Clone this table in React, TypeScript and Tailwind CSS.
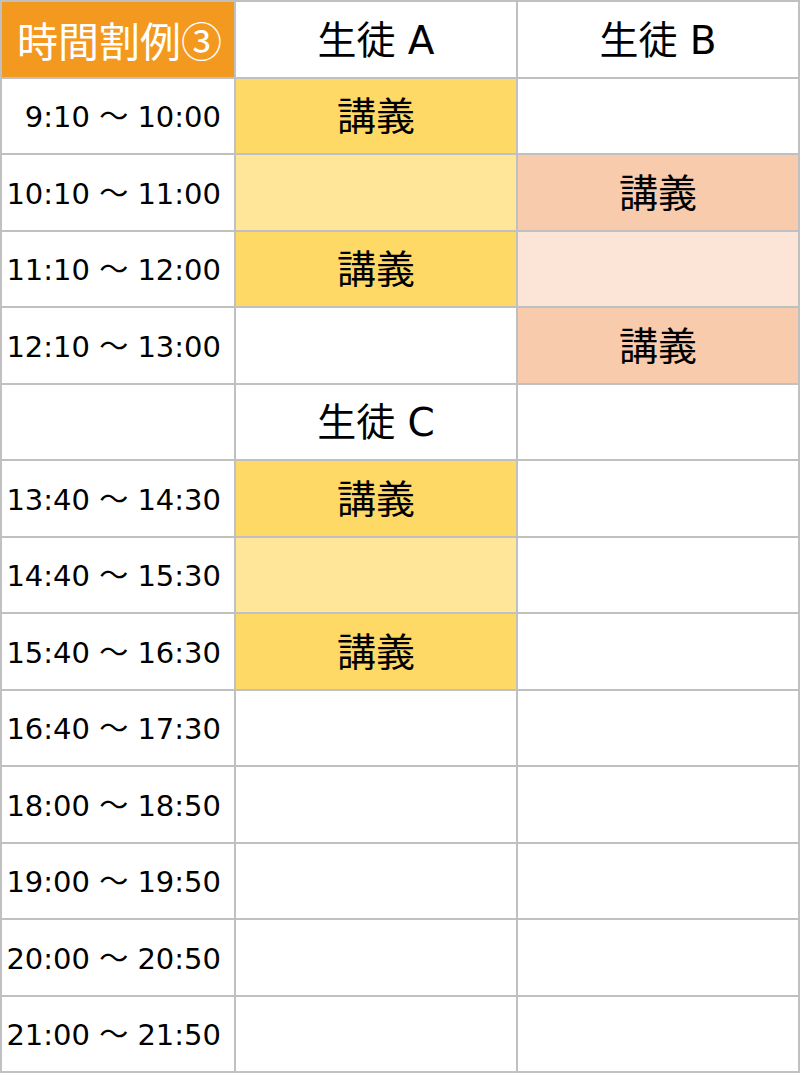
import React from "react";

type Cell = { text?: string; bg?: string; kind?: "time" | "head" | "title" | "lec" };

const Y = "bg-[#ffd966]";
const LY = "bg-[#ffe699]";
const P = "bg-[#f8cbad]";
const LP = "bg-[#fce4d6]";
const W = "bg-white";

const rows: Cell[][] = [
  [
    { text: "時間割例③", bg: "bg-[#f4991f]", kind: "title" },
    { text: "生徒 A", bg: W, kind: "head" },
    { text: "生徒 B", bg: W, kind: "head" },
  ],
  [{ text: "9:10 ～ 10:00", kind: "time" }, { text: "講義", bg: Y, kind: "lec" }, { bg: W }],
  [{ text: "10:10 ～ 11:00", kind: "time" }, { bg: LY }, { text: "講義", bg: P, kind: "lec" }],
  [{ text: "11:10 ～ 12:00", kind: "time" }, { text: "講義", bg: Y, kind: "lec" }, { bg: LP }],
  [{ text: "12:10 ～ 13:00", kind: "time" }, { bg: W }, { text: "講義", bg: P, kind: "lec" }],
  [{ text: "", kind: "time" }, { text: "生徒 C", bg: W, kind: "head" }, { bg: W }],
  [{ text: "13:40 ～ 14:30", kind: "time" }, { text: "講義", bg: Y, kind: "lec" }, { bg: W }],
  [{ text: "14:40 ～ 15:30", kind: "time" }, { bg: LY }, { bg: W }],
  [{ text: "15:40 ～ 16:30", kind: "time" }, { text: "講義", bg: Y, kind: "lec" }, { bg: W }],
  [{ text: "16:40 ～ 17:30", kind: "time" }, { bg: W }, { bg: W }],
  [{ text: "18:00 ～ 18:50", kind: "time" }, { bg: W }, { bg: W }],
  [{ text: "19:00 ～ 19:50", kind: "time" }, { bg: W }, { bg: W }],
  [{ text: "20:00 ～ 20:50", kind: "time" }, { bg: W }, { bg: W }],
  [{ text: "21:00 ～ 21:50", kind: "time" }, { bg: W }, { bg: W }],
];

function CellView({ c }: { c: Cell }) {
  if (c.kind === "time") {
    return (
      <div className="bg-white flex items-center justify-end pr-[13px] pt-[4px] text-[29px] text-black whitespace-nowrap [font-family:'DejaVu_Sans','Noto_Sans_CJK_JP',sans-serif]">
        {c.text}
      </div>
    );
  }
  if (c.kind === "title") {
    return (
      <div className={`${c.bg} flex items-center justify-center pl-[3px] text-[41px] text-white whitespace-nowrap [font-family:'Noto_Sans_CJK_JP',sans-serif]`}>
        {c.text}
      </div>
    );
  }
  if (c.kind === "head" || c.kind === "lec") {
    return (
      <div className={`${c.bg} flex items-center justify-center pt-[2px] text-[39px] text-black whitespace-nowrap [font-family:'DejaVu_Sans','Noto_Sans_CJK_JP',sans-serif]`}>
        {c.text}
      </div>
    );
  }
  return <div className={c.bg ?? "bg-white"} />;
}

export default function App() {
  return (
    <div className="w-[800px] h-[1073px] bg-white">
      <div className="grid grid-cols-[232px_280px_280px] grid-rows-[repeat(14,74.5px)] gap-[2px] p-[2px] bg-[#c0c0c0] w-[800px] h-[1073px] leading-none">
        {rows.map((r, i) => r.map((c, j) => <CellView key={`${i}-${j}`} c={c} />))}
      </div>
    </div>
  );
}
